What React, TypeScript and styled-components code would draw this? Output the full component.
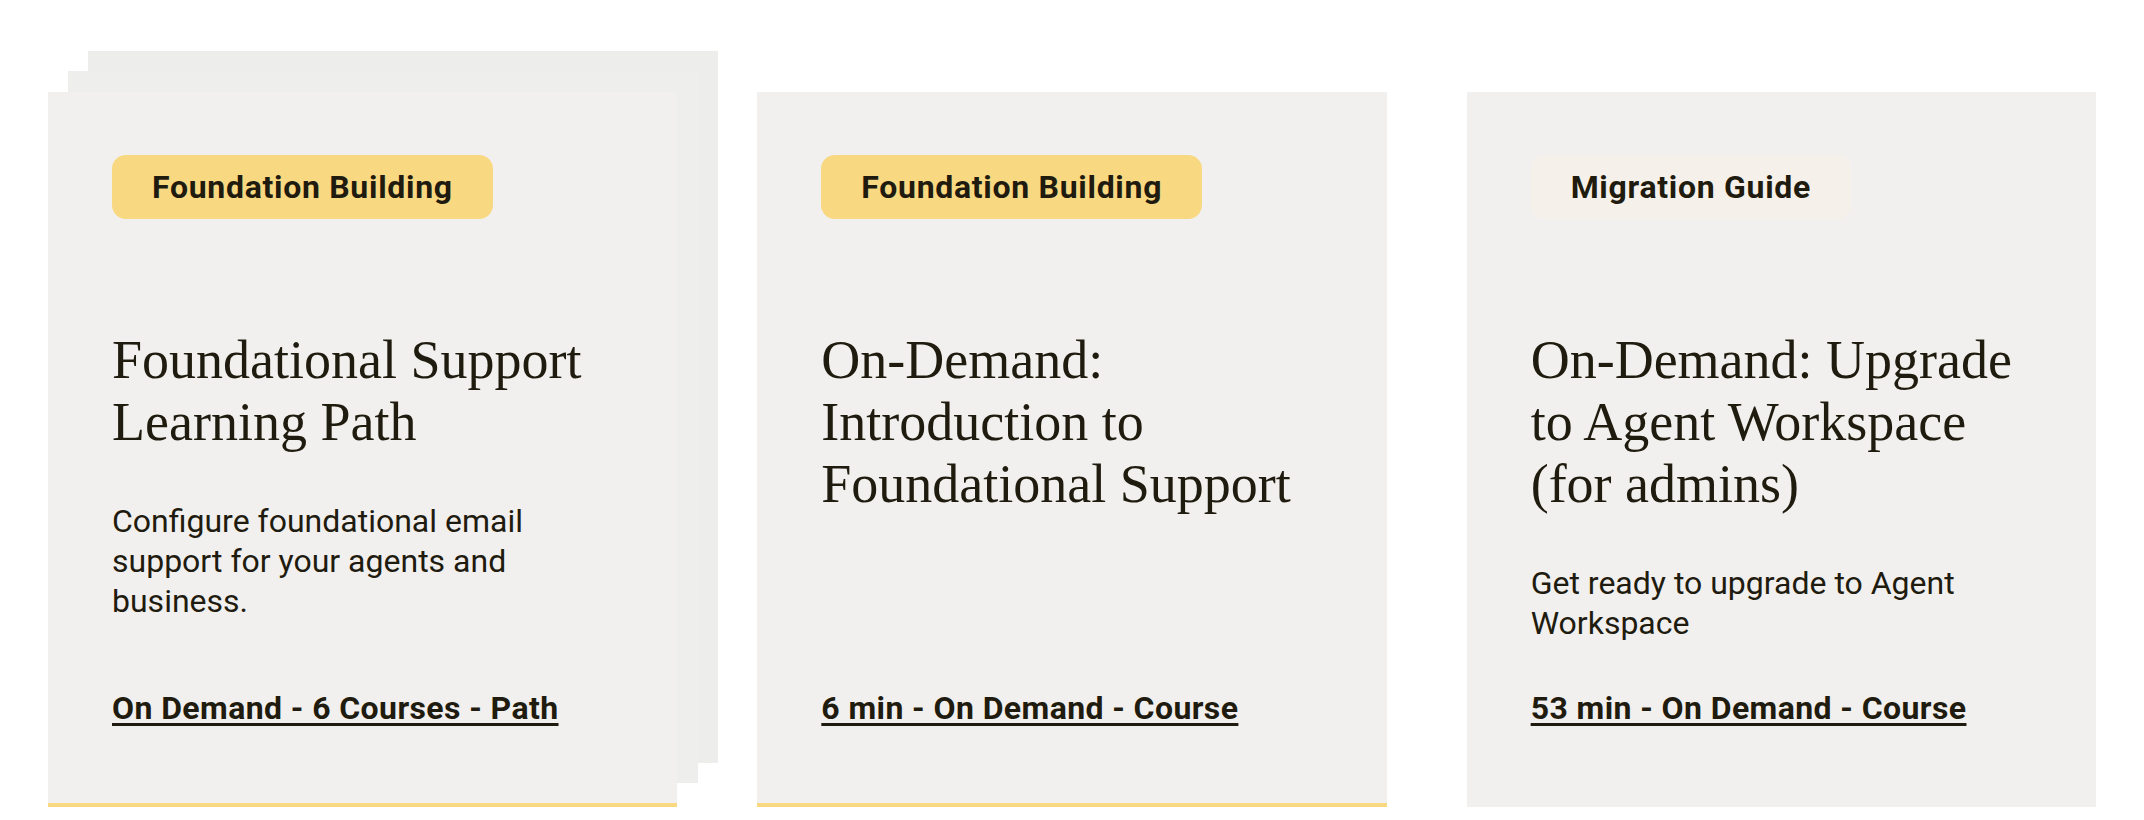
import styled, { createGlobalStyle } from "styled-components";

const GlobalStyle = createGlobalStyle`
  body {
    margin: 0;
    background: #ffffff;
  }
`;

const Row = styled.div`
  display: flex;
  gap: 80px;
  padding: 92px 48px 0;
`;

const Card = styled.div<{ $accent: string; $stacked?: boolean }>`
  position: relative;
  width: 630px;
  height: 715px;
  box-sizing: border-box;
  padding: 63px 64px 75px;
  background: #f1f0ee;
  border-bottom: 4px solid ${(p) => p.$accent};
  display: flex;
  flex-direction: column;
  align-items: flex-start;
  color: #1f1b0e;

  ${(p) =>
    p.$stacked &&
    `
    &::before,
    &::after {
      content: "";
      position: absolute;
      width: 630px;
      height: 712px;
      z-index: -1;
    }
    &::before {
      left: 40px;
      top: -41px;
      background: #ededec;
    }
    &::after {
      left: 20px;
      top: -21px;
      background: #eeeeed;
    }
  `}
`;

const Badge = styled.span<{ $bg: string }>`
  display: inline-block;
  background: ${(p) => p.$bg};
  border-radius: 14px;
  padding: 12px 40px;
  font-family: Roboto, "Liberation Sans", sans-serif;
  font-weight: 700;
  font-size: 32px;
  line-height: 40px;
  letter-spacing: 0.7px;
`;

const Title = styled.h3`
  margin: 110px 0 0;
  font-family: "Liberation Serif", "DejaVu Serif", serif;
  font-weight: 400;
  font-size: 54px;
  line-height: 62px;
`;

const Desc = styled.p`
  margin: 48px 0 0;
  font-family: Roboto, "Liberation Sans", sans-serif;
  font-size: 32px;
  line-height: 40px;
`;

const Meta = styled.a`
  margin-top: auto;
  font-family: Roboto, "Liberation Sans", sans-serif;
  font-weight: 700;
  font-size: 32px;
  line-height: 40px;
  letter-spacing: 0.4px;
  color: inherit;
  text-decoration: underline;
  text-decoration-thickness: 3px;
  text-underline-offset: 4px;
`;

const YELLOW = "#f9d882";

export default function App() {
  return (
    <>
      <GlobalStyle />
      <Row>
        <Card $accent={YELLOW} $stacked>
          <Badge $bg={YELLOW}>Foundation Building</Badge>
          <Title>Foundational Support Learning Path</Title>
          <Desc>Configure foundational email support for your agents and business.</Desc>
          <Meta href="#">On Demand - 6 Courses - Path</Meta>
        </Card>
        <Card $accent={YELLOW}>
          <Badge $bg={YELLOW}>Foundation Building</Badge>
          <Title>On-Demand: Introduction to Foundational Support</Title>
          <Meta href="#">6 min - On Demand - Course</Meta>
        </Card>
        <Card $accent="#f1f0ee">
          <Badge $bg="#f5f1ea">Migration Guide</Badge>
          <Title>On-Demand: Upgrade to Agent Workspace (for admins)</Title>
          <Desc>Get ready to upgrade to Agent Workspace</Desc>
          <Meta href="#">53 min - On Demand - Course</Meta>
        </Card>
      </Row>
    </>
  );
}
